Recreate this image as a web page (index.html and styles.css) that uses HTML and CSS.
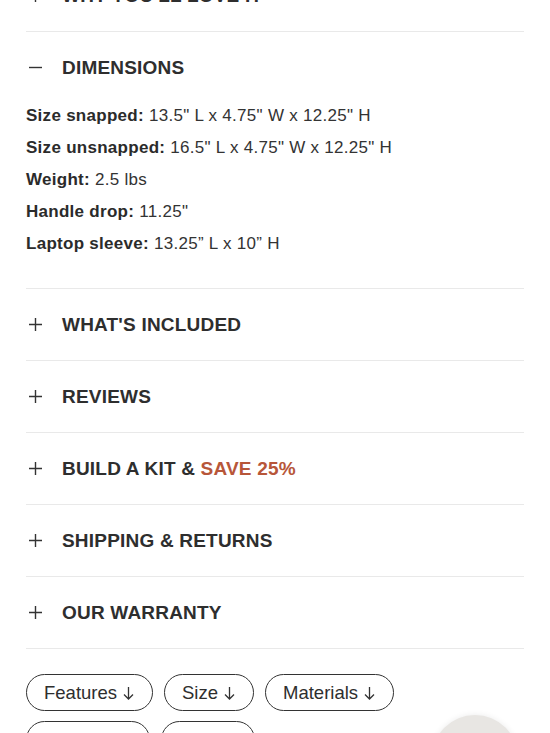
FILE: index.html
```html
<!DOCTYPE html>
<html>
<head>
<meta charset="utf-8">
<link rel="stylesheet" href="styles.css">
</head>
<body>
<div class="page">
  <div class="accordion">
    <div class="item">
      <div class="item-head">
        <span class="icon"><svg width="13" height="13" viewBox="0 0 13 13"><path d="M0 6.5H13M6.5 0V13" stroke="#333" stroke-width="1.4" fill="none"/></svg></span>
        <span class="title">WHY YOU'LL LOVE IT</span>
      </div>
    </div>
    <div class="item">
      <div class="item-head">
        <span class="icon"><svg width="13" height="13" viewBox="0 0 13 13"><path d="M0 6.5H13" stroke="#333" stroke-width="1.4" fill="none"/></svg></span>
        <span class="title">DIMENSIONS</span>
      </div>
      <div class="item-body">
        <p><b>Size snapped:</b> 13.5" L x 4.75" W x 12.25" H</p>
        <p><b>Size unsnapped:</b> 16.5" L x 4.75" W x 12.25" H</p>
        <p><b>Weight:</b> 2.5 lbs</p>
        <p><b>Handle drop:</b> 11.25"</p>
        <p><b>Laptop sleeve:</b> 13.25” L x 10” H</p>
      </div>
    </div>
    <div class="item">
      <div class="item-head">
        <span class="icon"><svg width="13" height="13" viewBox="0 0 13 13"><path d="M0 6.5H13M6.5 0V13" stroke="#333" stroke-width="1.4" fill="none"/></svg></span>
        <span class="title">WHAT'S INCLUDED</span>
      </div>
    </div>
    <div class="item">
      <div class="item-head">
        <span class="icon"><svg width="13" height="13" viewBox="0 0 13 13"><path d="M0 6.5H13M6.5 0V13" stroke="#333" stroke-width="1.4" fill="none"/></svg></span>
        <span class="title">REVIEWS</span>
      </div>
    </div>
    <div class="item">
      <div class="item-head">
        <span class="icon"><svg width="13" height="13" viewBox="0 0 13 13"><path d="M0 6.5H13M6.5 0V13" stroke="#333" stroke-width="1.4" fill="none"/></svg></span>
        <span class="title">BUILD A KIT &amp; <span class="accent">SAVE 25%</span></span>
      </div>
    </div>
    <div class="item">
      <div class="item-head">
        <span class="icon"><svg width="13" height="13" viewBox="0 0 13 13"><path d="M0 6.5H13M6.5 0V13" stroke="#333" stroke-width="1.4" fill="none"/></svg></span>
        <span class="title">SHIPPING &amp; RETURNS</span>
      </div>
    </div>
    <div class="item">
      <div class="item-head">
        <span class="icon"><svg width="13" height="13" viewBox="0 0 13 13"><path d="M0 6.5H13M6.5 0V13" stroke="#333" stroke-width="1.4" fill="none"/></svg></span>
        <span class="title">OUR WARRANTY</span>
      </div>
    </div>
  </div>
  <div class="pills">
    <a class="pill">Features<svg class="arrow" width="11" height="14" viewBox="0 0 11 14"><path d="M5.5 1V13M1 8.5L5.5 13L10 8.5" stroke="#333" stroke-width="1.3" fill="none"/></svg></a>
    <a class="pill">Size<svg class="arrow" width="11" height="14" viewBox="0 0 11 14"><path d="M5.5 1V13M1 8.5L5.5 13L10 8.5" stroke="#333" stroke-width="1.3" fill="none"/></svg></a>
    <a class="pill">Materials<svg class="arrow" width="11" height="14" viewBox="0 0 11 14"><path d="M5.5 1V13M1 8.5L5.5 13L10 8.5" stroke="#333" stroke-width="1.3" fill="none"/></svg></a>
    <a class="pill">Reviews<svg class="arrow" width="11" height="14" viewBox="0 0 11 14"><path d="M5.5 1V13M1 8.5L5.5 13L10 8.5" stroke="#333" stroke-width="1.3" fill="none"/></svg></a>
    <a class="pill">Care<svg class="arrow" width="11" height="14" viewBox="0 0 11 14"><path d="M5.5 1V13M1 8.5L5.5 13L10 8.5" stroke="#333" stroke-width="1.3" fill="none"/></svg></a>
  </div>
</div>
<div class="float-btn"></div>
</body>
</html>
```

FILE: styles.css
```css
html, body {
  margin: 0;
  padding: 0;
  background: #ffffff;
  overflow: hidden;
}
body {
  font-family: "Liberation Sans", Arial, sans-serif;
  color: #2f2f2f;
  width: 550px;
  height: 733px;
  position: relative;
}
.page {
  margin: -40px 26px 0 26px;
}
.item {
  border-bottom: 1px solid #e9e9e9;
}
.item-head {
  height: 71px;
  display: flex;
  align-items: center;
  padding-left: 3px;
  gap: 20px;
}
.icon {
  display: flex;
  width: 13px;
  height: 13px;
}
.title {
  font-size: 19px;
  font-weight: 700;
  letter-spacing: 0.2px;
  color: #2e2e2e;
}
.accent {
  color: #b75639;
}
.item-body {
  padding-top: 1px;
  padding-bottom: 32px;
  display: flex;
  flex-direction: column;
  gap: 8px;
}
.item-body p {
  margin: 0;
  font-size: 17px;
  line-height: 24px;
  letter-spacing: 0.28px;
  color: #333;
}
.item-body b {
  font-weight: 700;
  color: #2b2b2b;
}
.pills {
  margin-top: 25px;
  display: flex;
  flex-wrap: wrap;
  column-gap: 11px;
  row-gap: 10px;
  width: 400px;
}
.pill {
  display: flex;
  align-items: center;
  height: 35px;
  padding: 0 18px 0 17px;
  border: 1.5px solid #333;
  border-radius: 20px;
  font-size: 18.5px;
  color: #2e2e2e;
}
.arrow {
  margin-left: 6px;
  margin-top: 1px;
}
.float-btn {
  position: absolute;
  left: 432px;
  top: 715px;
  width: 86px;
  height: 86px;
  border-radius: 50%;
  background: #e8e6e3;
  box-shadow: 0 0 6px rgba(0,0,0,0.08);
}
```
